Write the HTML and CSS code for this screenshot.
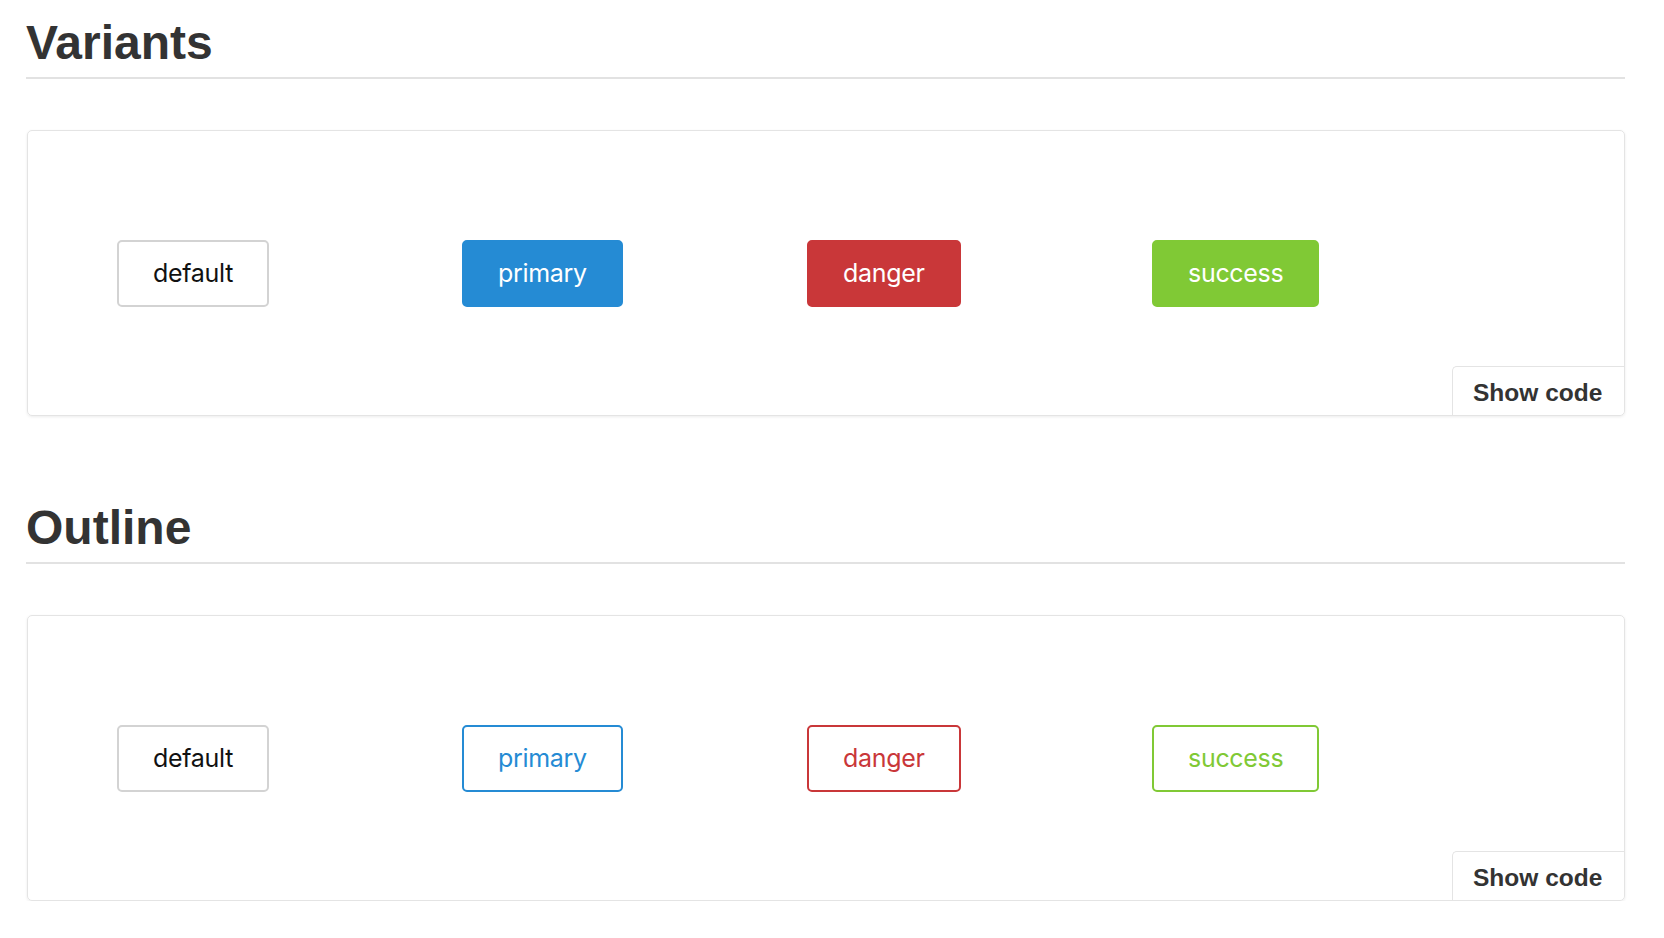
FILE: index.html
```html
<!DOCTYPE html>
<html lang="en">
<head>
<meta charset="utf-8">
<title>Buttons</title>
<link rel="stylesheet" href="styles.css">
</head>
<body>
<main class="page">
  <section class="section">
    <h2 class="section-title">Variants</h2>
    <div class="demo">
      <div class="demo-body">
        <button class="btn btn-default">default</button>
        <button class="btn btn-primary">primary</button>
        <button class="btn btn-danger">danger</button>
        <button class="btn btn-success">success</button>
      </div>
      <button class="show-code">Show code</button>
    </div>
  </section>
  <section class="section">
    <h2 class="section-title">Outline</h2>
    <div class="demo">
      <div class="demo-body">
        <button class="btn btn-default">default</button>
        <button class="btn btn-outline-primary">primary</button>
        <button class="btn btn-outline-danger">danger</button>
        <button class="btn btn-outline-success">success</button>
      </div>
      <button class="show-code">Show code</button>
    </div>
  </section>
</main>
</body>
</html>
```
FILE: styles.css
```css
* { box-sizing: border-box; }
html, body { margin: 0; padding: 0; background: #fff; }
body { font-family: "Liberation Sans", Arial, sans-serif; color: #333; }

.page {
  width: 1599px;
  margin-left: 26px;
  padding-top: 15px;
}

.section + .section { margin-top: 84px; }

.section-title {
  margin: 0;
  font-size: 48px;
  line-height: 55px;
  font-weight: 700;
  color: #333;
  padding-bottom: 7px;
  border-bottom: 2px solid #e2e2e2;
}

.demo {
  position: relative;
  margin-top: 51px;
  height: 286px;
  margin-left: 1px;
  border: 1px solid #e4e4e4;
  border-radius: 5px;
  box-shadow: 0 1px 3px rgba(0, 0, 0, 0.08);
  display: flex;
  align-items: center;
}

.demo-body {
  display: grid;
  grid-template-columns: repeat(4, 345px);
  justify-items: start;
  align-items: center;
  padding-left: 89px;
}

.btn {
  font-family: Inter, "Noto Sans", sans-serif;
  font-size: 25px;
  letter-spacing: -0.3px;
  line-height: 25px;
  height: 67px;
  padding: 1px 34px 0;
  border-radius: 5px;
  border: 2px solid transparent;
  background: #fff;
  cursor: pointer;
  display: inline-flex;
  align-items: center;
}

.btn-default { border-color: #d3d3d3; color: #111; }
.btn-primary { background: #258bd4; border-color: #258bd4; color: #fff; }
.btn-danger { background: #c93739; border-color: #c93739; color: #fff; }
.btn-success { background: #80c935; border-color: #80c935; color: #fff; }

.btn-outline-primary { border-color: #258bd4; color: #258bd4; }
.btn-outline-danger { border-color: #c93739; color: #c93739; }
.btn-outline-success { border-color: #80c935; color: #80c935; }

.show-code {
  position: absolute;
  right: 0;
  bottom: 0;
  width: 172px;
  height: 49px;
  padding: 3px 0 0 20px;
  text-align: left;
  background: #fff;
  border: 0;
  border-top: 1px solid #e4e4e4;
  border-left: 1px solid #e4e4e4;
  border-radius: 5px 0 5px 0;
  font-family: "Liberation Sans", Arial, sans-serif;
  font-weight: 700;
  font-size: 24.5px;
  color: #333;
  cursor: pointer;
}
```
